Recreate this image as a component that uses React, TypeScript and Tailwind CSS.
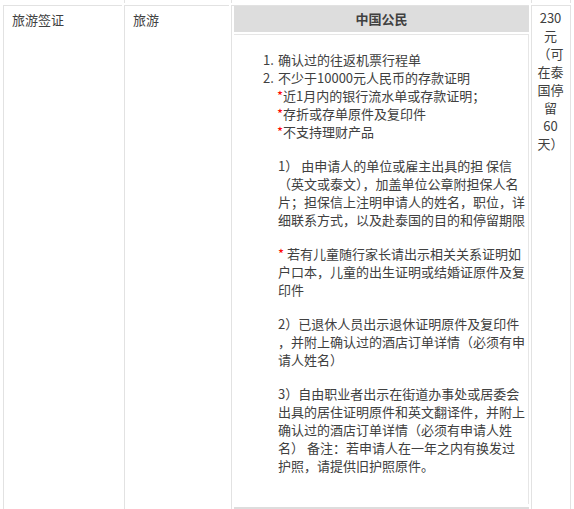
const Star = () => <span className="text-[#f00]">*</span>;

export default function App() {
  return (
    <div className="w-[574px] h-[509px] overflow-hidden bg-white font-['Noto_Sans_CJK_SC','Noto_Sans',sans-serif] text-[13px] leading-[18px] text-[#404040]">
      {/* bottom edge of the row above */}
      <div className="flex h-[3px] gap-[2px] pl-[3px]">
        <div className="w-[119px]" />
        <div className="w-[105px] border-l border-[#e2e2e2]" />
        <div className="w-[298px] border-l border-[#e2e2e2]" />
        <div className="w-[40px] border-x border-[#e2e2e2]" />
      </div>

      <div className="mt-[2px] flex items-stretch gap-[2px] pl-[3px]">
        {/* 签证类型 */}
        <div className="w-[119px] shrink-0 border-l border-t border-[#e2e2e2] pl-[8px] pt-[5px]">
          旅游签证
        </div>

        {/* 用途 */}
        <div className="w-[105px] shrink-0 border-l border-t border-[#e2e2e2] pl-[8px] pt-[5px]">
          旅游
        </div>

        {/* 所需材料 */}
        <div className="w-[298px] shrink-0 border-l border-t border-[#e2e2e2] pl-[2px]">
          <div className="flex h-[26px] items-center justify-center bg-[#dddddd] font-bold">
            中国公民
          </div>
          <div className="mt-[2px] h-[470px] border-r border-t border-[#e6e6e6] pt-[16px] whitespace-nowrap">
            <div className="pl-[29px]">
              <div className="flex">
                <span className="w-[15px]">1.</span>
                <span>确认过的往返机票行程单</span>
              </div>
              <div className="flex">
                <span className="w-[15px]">2.</span>
                <span>不少于10000元人民币的存款证明</span>
              </div>
              <div className="pl-[14px]">
                <div>
                  <Star />近1月内的银行流水单或存款证明；
                </div>
                <div>
                  <Star />存折或存单原件及复印件
                </div>
                <div>
                  <Star />不支持理财产品
                </div>
              </div>
            </div>

            <div className="mt-[16px] pl-[44px]">
              1） 由申请人的单位或雇主出具的担 保信
              <br />
              （英文或泰文），加盖单位公章附担保人名
              <br />
              片；担保信上注明申请人的姓名，职位，详
              <br />
              细联系方式，以及赴泰国的目的和停留期限
            </div>

            <div className="mt-[16px] pl-[44px]">
              <Star /> 若有儿童随行家长请出示相关关系证明如
              <br />
              户口本，儿童的出生证明或结婚证原件及复
              <br />
              印件
            </div>

            <div className="mt-[16px] pl-[44px]">
              2）已退休人员出示退休证明原件及复印件
              <br />
              ，并附上确认过的酒店订单详情（必须有申
              <br />
              请人姓名）
            </div>

            <div className="mt-[16px] pl-[44px]">
              3）自由职业者出示在街道办事处或居委会
              <br />
              出具的居住证明原件和英文翻译件，并附上
              <br />
              确认过的酒店订单详情（必须有申请人姓
              <br />
              名） 备注：若申请人在一年之内有换发过
              <br />
              护照，请提供旧护照原件。
            </div>
          </div>
          <div className="mt-[3px] h-[26px] bg-[#dddddd]" />
        </div>

        {/* 签证费 */}
        <div className="w-[40px] shrink-0 border-x border-t border-[#e2e2e2] pl-[5px] pr-[6px] pt-[3px] text-center">
          230元（可在泰国停留60天）
        </div>
      </div>
    </div>
  );
}
